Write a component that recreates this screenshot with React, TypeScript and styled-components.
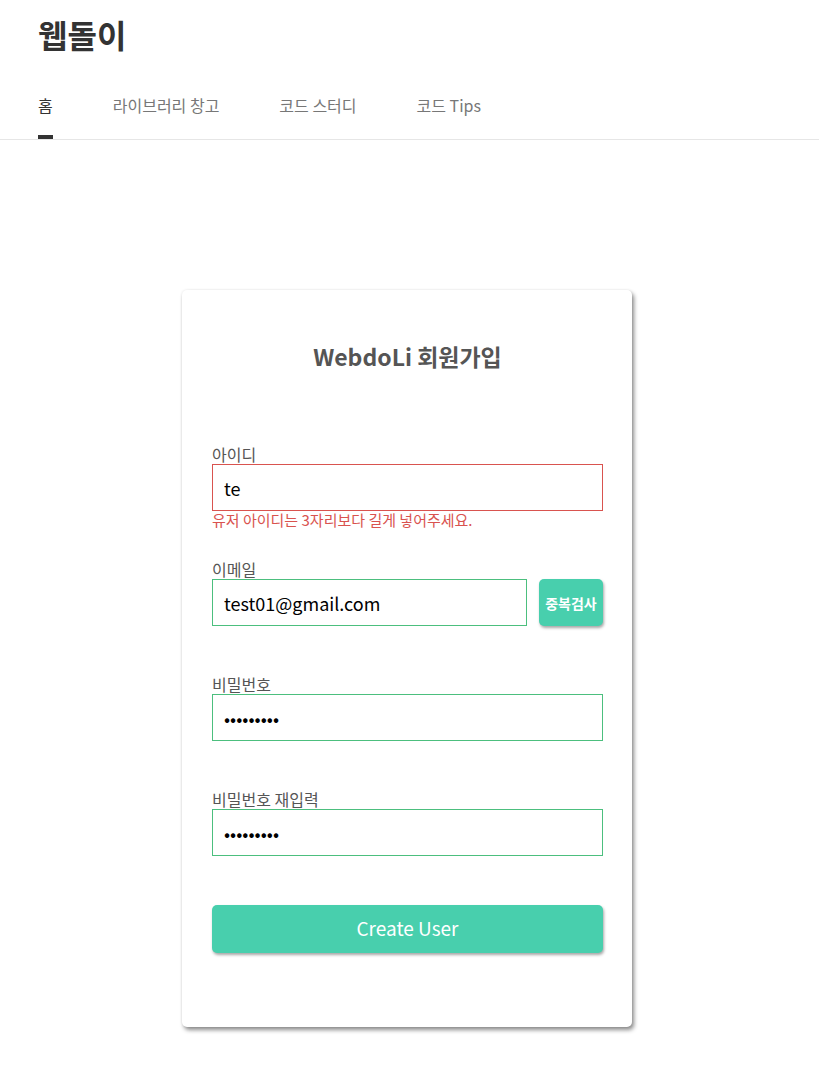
import React, { useState } from "react";
import styled, { createGlobalStyle } from "styled-components";

const GlobalStyle = createGlobalStyle`
  * { box-sizing: border-box; }
  body {
    margin: 0;
    background: #ffffff;
    font-family: "Noto Sans CJK KR", "Noto Sans", sans-serif;
  }
`;

const Header = styled.header`
  border-bottom: 1px solid #e6e6e6;
  padding: 0 38px;
`;

const Logo = styled.h1`
  margin: 0;
  padding-top: 12px;
  height: 62px;
  font-size: 32px;
  line-height: 44px;
  font-weight: 700;
  color: #333;
`;

const Nav = styled.nav`
  display: flex;
  gap: 60px;
  height: 77px;
`;

const Tab = styled.a<{ $active?: boolean }>`
  display: flex;
  align-items: center;
  height: 100%;
  padding-top: 12px;
  font-size: 16px;
  color: ${(p) => (p.$active ? "#333" : "#777")};
  text-decoration: none;
  cursor: pointer;
  border-bottom: 4px solid ${(p) => (p.$active ? "#333" : "transparent")};
`;

const Main = styled.main`
  display: flex;
  justify-content: center;
  padding: 150px 5px 50px 0;
`;

const Card = styled.div`
  width: 450px;
  background: #fff;
  border-radius: 5px;
  box-shadow: 2px 3px 4px rgba(0, 0, 0, 0.45), 0 0 3px rgba(0, 0, 0, 0.08);
  padding: 46px 29px 74px 30px;
`;

const Title = styled.h2`
  margin: 0 0 69px;
  text-align: center;
  font-size: 23px;
  line-height: 40px;
  font-weight: 700;
  color: #555;
`;

const Field = styled.div`
  margin-bottom: 29px;
`;

const Label = styled.label`
  display: block;
  font-size: 16px;
  line-height: 19px;
  color: #555;
`;

const Row = styled.div`
  display: flex;
  gap: 12px;
`;

const Input = styled.input<{ $error?: boolean }>`
  flex: 1;
  width: 100%;
  height: 47px;
  border: 1px solid ${(p) => (p.$error ? "#d9534f" : "#4cbf7e")};
  padding: 0 11px;
  font-family: "Noto Sans CJK KR", "Noto Sans", sans-serif;
  font-size: 18px;
  color: #000;
  outline: none;
  background: #fff;
`;

const Helper = styled.div`
  height: 20px;
  font-size: 15px;
  line-height: 18px;
  color: #d9534f;
`;

const CheckButton = styled.button`
  width: 64px;
  height: 47px;
  border: none;
  border-radius: 5px;
  background: #48cfad;
  color: #fff;
  font-family: "Noto Sans CJK KR", sans-serif;
  font-size: 14px;
  font-weight: 700;
  padding: 0;
  box-shadow: 1px 2px 3px rgba(0, 0, 0, 0.35);
  cursor: pointer;
`;

const SubmitButton = styled.button`
  display: block;
  width: 100%;
  height: 48px;
  margin-top: 17px;
  padding: 0 0 3px;
  border: none;
  border-radius: 5px;
  background: #48cfad;
  color: #fff;
  font-family: "Noto Sans CJK KR", sans-serif;
  font-size: 19px;
  box-shadow: 1px 2px 3px rgba(0, 0, 0, 0.35);
  cursor: pointer;
`;

const tabs = ["홈", "라이브러리 창고", "코드 스터디", "코드 Tips"];

const App = () => {
  const [id, setId] = useState("te");
  const [email, setEmail] = useState("test01@gmail.com");
  const [pw, setPw] = useState("123456789");
  const [pw2, setPw2] = useState("123456789");

  return (
    <>
      <GlobalStyle />
      <Header>
        <Logo>웹돌이</Logo>
        <Nav>
          {tabs.map((t, i) => (
            <Tab key={t} $active={i === 0}>
              {t}
            </Tab>
          ))}
        </Nav>
      </Header>
      <Main>
        <Card>
          <Title>WebdoLi 회원가입</Title>
          <Field>
            <Label>아이디</Label>
            <Input $error value={id} onChange={(e) => setId(e.target.value)} />
            <Helper>유저 아이디는 3자리보다 길게 넣어주세요.</Helper>
          </Field>
          <Field>
            <Label>이메일</Label>
            <Row>
              <Input value={email} onChange={(e) => setEmail(e.target.value)} />
              <CheckButton>중복검사</CheckButton>
            </Row>
            <Helper />
          </Field>
          <Field>
            <Label>비밀번호</Label>
            <Input type="password" value={pw} onChange={(e) => setPw(e.target.value)} />
            <Helper />
          </Field>
          <Field>
            <Label>비밀번호 재입력</Label>
            <Input type="password" value={pw2} onChange={(e) => setPw2(e.target.value)} />
            <Helper />
          </Field>
          <SubmitButton>Create User</SubmitButton>
        </Card>
      </Main>
    </>
  );
};

export default App;
